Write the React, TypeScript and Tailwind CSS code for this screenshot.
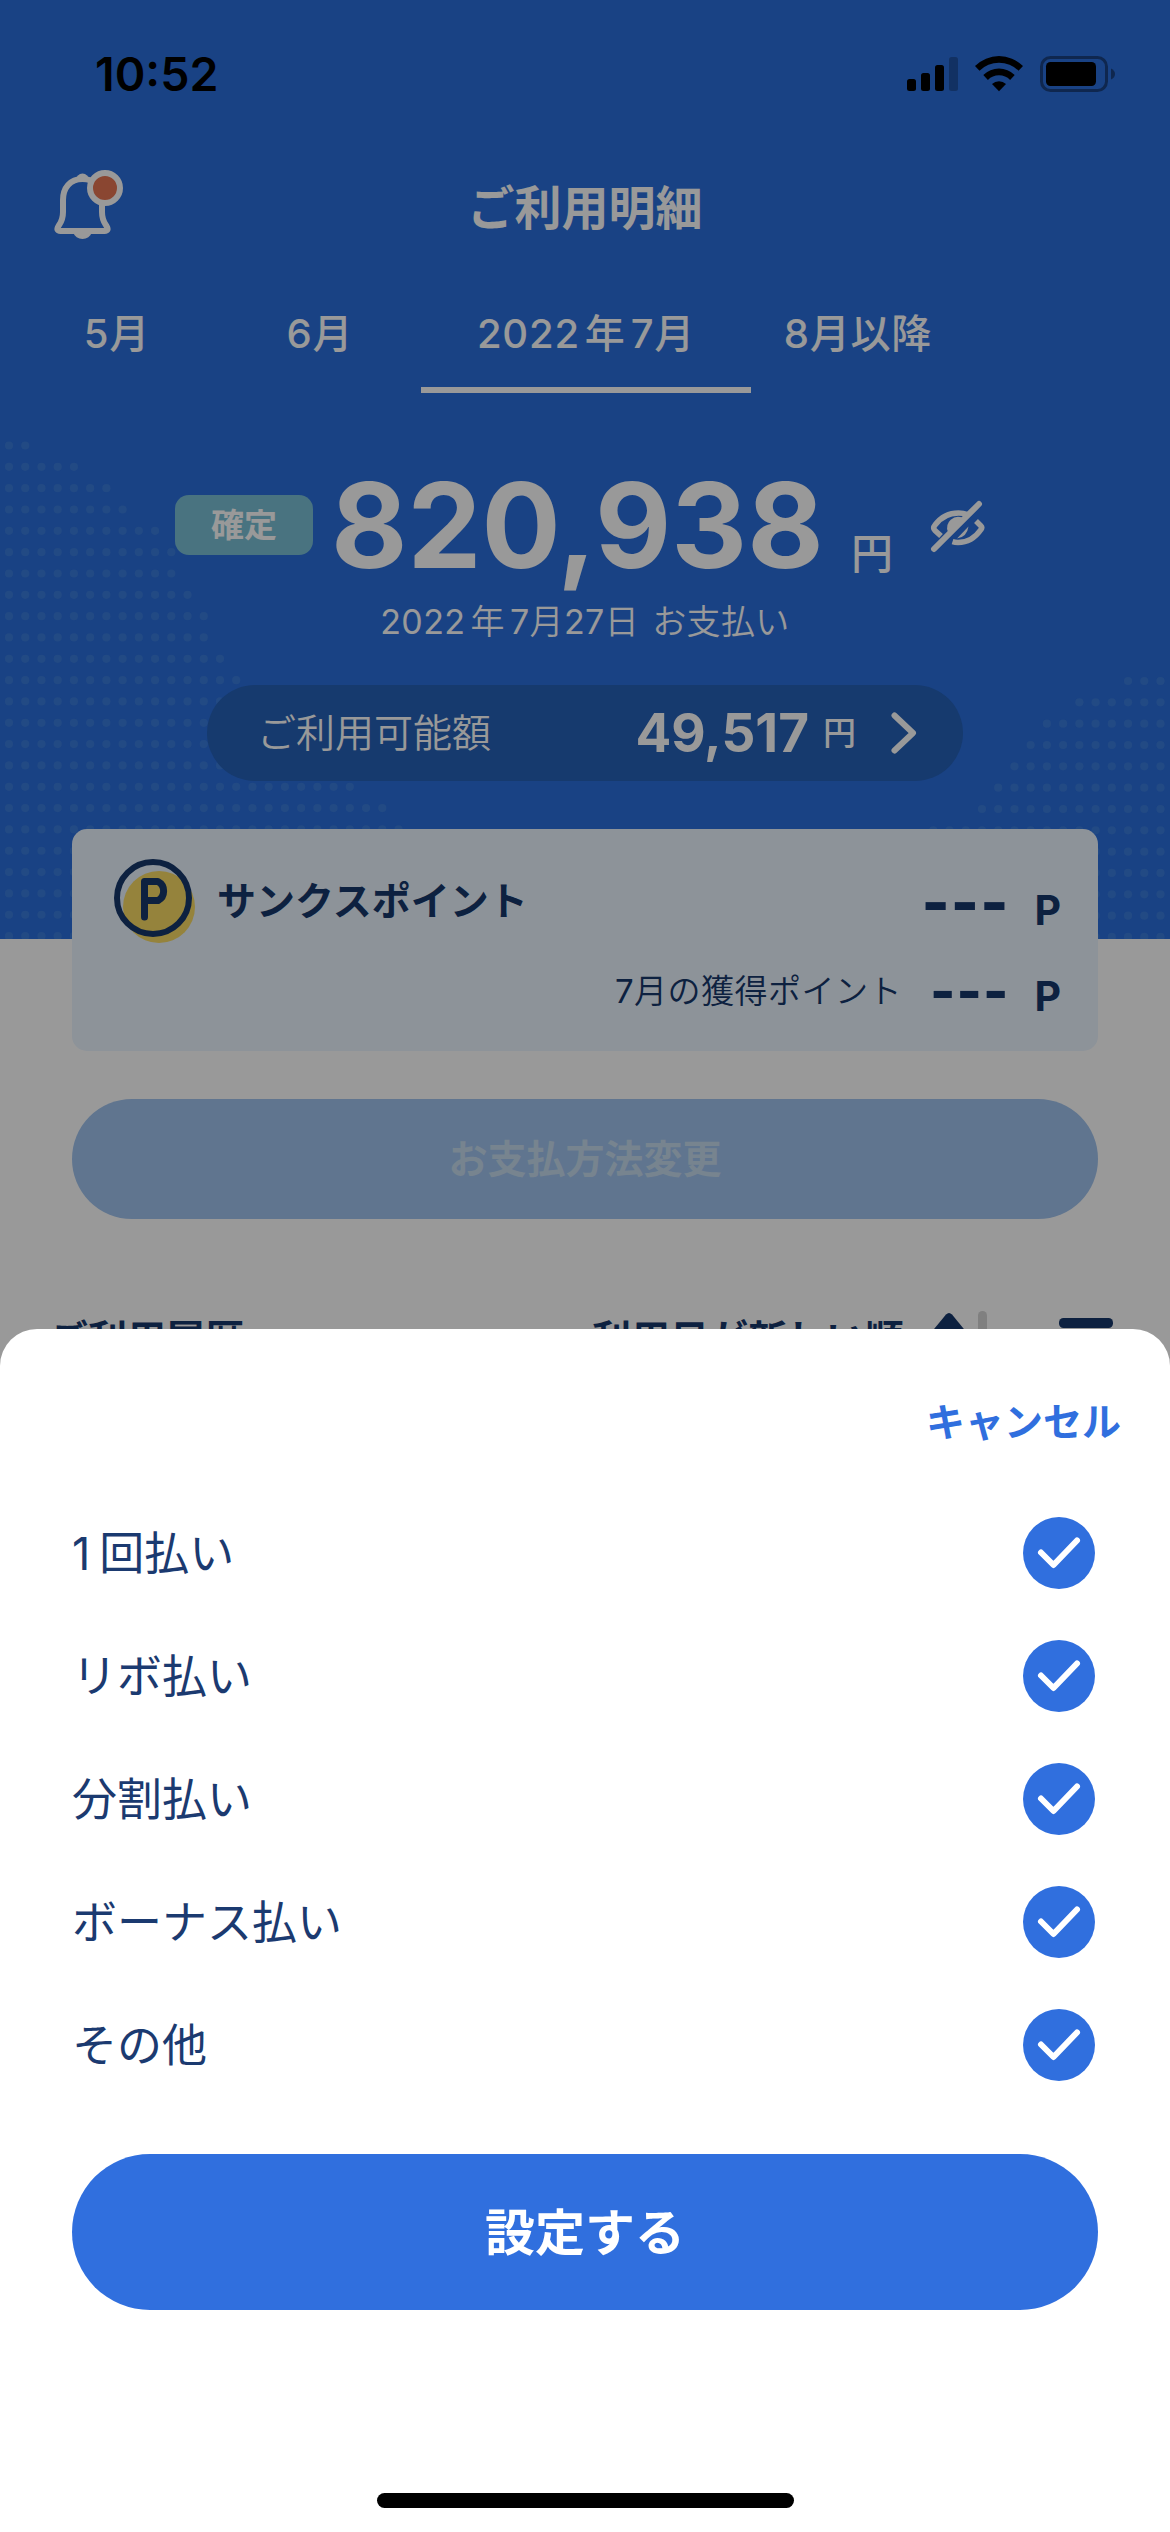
import { ReactNode, useState } from "react";

interface Tab {
  id: string;
  label: ReactNode;
  width: string;
}

const TABS: Tab[] = [
  { id: "may", label: "5月", width: "w-[204px]" },
  { id: "jun", label: "6月", width: "w-[202px]" },
  {
    id: "jul",
    label: (
      <>
        2022<span className="mx-[5px]">年</span>7月
      </>
    ),
    width: "w-[330px]",
  },
  { id: "aug", label: "8月以降", width: "w-[214px]" },
];

const OPTIONS = ["1回払い", "リボ払い", "分割払い", "ボーナス払い", "その他"];

// number of dots per row in the halftone corners
const LEFT_DOTS = [2, 5, 7, 8, 10, 11, 11, 12, 13, 13, 14, 15, 16, 17, 19, 20, 22, 24, 25, 27, 28, 29, 30, 31];
const RIGHT_DOTS = [3, 6, 8, 9, 10, 11, 12, 15, 16, 17, 18, 19, 20];

function HeroDots() {
  return (
    <svg className="absolute inset-0" width="1170" height="939" fill="#3a7cdc">
      {LEFT_DOTS.map((count, row) =>
        Array.from({ length: count }, (_, i) => (
          <circle key={`l${row}-${i}`} cx={9 + i * 16.23} cy={445.5 + row * 21.33} r="4.1" />
        )),
      )}
      {RIGHT_DOTS.map((count, row) =>
        Array.from({ length: count }, (_, i) => (
          <circle key={`r${row}-${i}`} cx={1160.5 - i * 16.23} cy={681 + row * 21.33} r="4.1" />
        )),
      )}
    </svg>
  );
}

function StatusBar() {
  return (
    <div className="absolute inset-x-0 top-0 z-20 flex h-[148px] items-center justify-between pl-[95px] pr-[54px] text-black">
      <span className="text-[46.5px] font-semibold leading-[48px]">10:52</span>
      <svg width="209" height="40" viewBox="907 54 209 40">
        <rect x="907" y="79" width="9" height="12" rx="2.5" />
        <rect x="921" y="73" width="9" height="18" rx="2.5" />
        <rect x="935" y="65" width="9" height="26" rx="2.5" />
        <rect x="949" y="57" width="9" height="34" rx="2.5" opacity="0.25" />
        <path d="M975 66a34 34 0 0 1 48 0l-4.500 4.800a27.600 27.600 0 0 0-39 0z" />
        <path d="M983.300 75a22.500 22.500 0 0 1 31.400 0l-4.600 4.900a15.800 15.800 0 0 0-22.200 0z" />
        <path d="M992 84a10.500 10.500 0 0 1 14 0l-7 7.300z" />
        <rect x="1041.500" y="57.500" width="65" height="33" rx="9" fill="none" stroke="#000" strokeWidth="3" opacity="0.4" />
        <rect x="1046" y="62" width="50" height="24" rx="4.500" />
        <path d="M1111 68.500q4 2 4 5.500t-4 5.500z" opacity="0.4" />
      </svg>
    </div>
  );
}

function BellIcon() {
  return (
    <svg width="72" height="72" viewBox="53 169 72 72">
      <path d="M76 180a6.500 6.500 0 0 1 13 0z" fill="#fff" />
      <path
        d="M82.500 179C70 179 63 188 63 200v12c0 8-2 10-4.500 14q-3 5 2 5h44q5 0 2-5c-2.500-4-4.500-6-4.500-14v-12c0-12-7-21-19.500-21z"
        fill="none"
        stroke="#fff"
        strokeWidth="6"
      />
      <path d="M73.500 233h18a9.200 7.500 0 0 1-18 0z" fill="#fff" />
      <circle cx="105" cy="188" r="15" fill="#e67553" stroke="#fff" strokeWidth="6" />
    </svg>
  );
}

function EyeOffIcon() {
  return (
    <svg width="56" height="54" viewBox="929 500 56 54" fill="none" stroke="#fff" strokeWidth="5.500">
      <path d="M940 536l-6-5.500q-2.500-2.500 0-5.500q9-12 23.500-12q5 0 9 1.500" />
      <path d="M975 521l5 5q1.500 1.500 0 3.500q-9 13-23 13q-3 0-5.500-.8" />
      <path d="M947 532a11 11 0 0 1 15-14z" fill="#fff" stroke="none" />
      <path d="M956 538.500q10-1.500 11.500-12z" fill="#fff" stroke="none" />
      <path d="M933 549L978 504" strokeWidth="6" strokeLinecap="round" />
    </svg>
  );
}

function PointIcon() {
  return (
    <svg width="84" height="86" viewBox="113 858 84 86" fill="none" stroke="#16376b">
      <circle cx="159" cy="907" r="36" fill="#f8da64" stroke="none" />
      <circle cx="153" cy="898" r="36" strokeWidth="6" />
      <path d="M144.500 917V881.500h13.500a9.800 10.500 0 0 1 0 19h-13" strokeWidth="7" strokeLinecap="round" strokeLinejoin="round" />
    </svg>
  );
}

function CheckMark({ checked }: { checked: boolean }) {
  return (
    <span
      className={`flex size-[72px] items-center justify-center rounded-full ${
        checked ? "bg-[#306fde]" : "bg-stone-200"
      }`}
    >
      <svg width="72" height="72" viewBox="0 0 72 72" fill="none" stroke="#fff" strokeWidth="6" strokeLinecap="round" strokeLinejoin="round">
        <path d="M18 35.500L30.500 48L54 23.500" />
      </svg>
    </span>
  );
}

function Header() {
  return (
    <div className="relative h-[939px] bg-[#2a6edc] text-white">
      <HeroDots />
      <div className="relative flex flex-col">
        <div className="mt-[147px] grid h-[120px] grid-cols-3 items-center px-[53px]">
          <div className="pb-[4px]">
            <BellIcon />
          </div>
          <h1 className="pt-[2px] text-center text-[47px] font-bold leading-[60px]">ご利用明細</h1>
        </div>

        <nav className="flex h-[126px] pl-[15px]">
          {TABS.map((tab) => (
            <div
              key={tab.id}
              className={`flex shrink-0 justify-center border-b-[6px] pt-[37px] text-[40px] font-medium leading-[60px] tracking-[0.8px] ${tab.width} ${
                tab.id === "jul" ? "border-white" : "border-transparent"
              }`}
            >
              {tab.label}
            </div>
          ))}
        </nav>

        <div className="flex h-[196px] pl-[175px]">
          <span className="mt-[102px] flex h-[60px] w-[138px] items-center justify-center rounded-[14px] bg-[#7bc0d5] pt-[1px] text-[33px] font-bold leading-none">
            確定
          </span>
          <span className="ml-[18px] mt-[72px] w-[504px] text-[117.5px] font-bold leading-[120px]">820,938</span>
          <span className="ml-[16px] mt-[131px] text-[42px] font-medium leading-[60px]">円</span>
          <span className="ml-[37px] mt-[107px]">
            <EyeOffIcon />
          </span>
        </div>
        <div className="mt-[13px] text-center text-[34px] font-[350] leading-[40px] tracking-[0.4px]">
          <span className="font-normal">2022</span>
          <span className="mx-[5px]">年</span>
          <span className="font-normal">7</span>月<span className="font-normal">27</span>日
          <span className="ml-[13px]">お支払い</span>
        </div>

        <div className="mx-[207px] mt-[43px] flex h-[96px] items-center rounded-full bg-[#2561b7] pl-[50px] pr-[45px]">
          <span className="text-[39px] font-[350] leading-[60px]">ご利用可能額</span>
          <span className="ml-auto text-[53px] font-bold leading-[60px]">49,517</span>
          <span className="ml-[14px] text-[33px] font-medium leading-[60px]">円</span>
          <svg className="ml-[34px]" width="28" height="42" viewBox="0 0 28 42" fill="none" stroke="#fff" strokeWidth="6" strokeLinecap="round" strokeLinejoin="round">
            <path d="M4.500 3.500L23 21L4.500 38.500" />
          </svg>
        </div>
      </div>
    </div>
  );
}

function PointCard() {
  return (
    <div className="relative mx-[72px] -mt-[110px] h-[222px] rounded-[15px] bg-[#ebf5ff] text-[#16376b]">
      <div className="flex h-[116px] items-start pl-[41px] pr-[37px] pt-[29px]">
        <PointIcon />
        <span className="ml-[20px] mt-[13px] text-[39px] font-bold leading-[60px]">サンクスポイント</span>
        <span className="ml-auto mt-[14px] text-[60px] font-extrabold leading-[60px] tracking-[1px]">---</span>
        <span className="ml-[25px] mt-[22px] text-[41px] font-bold leading-[60px]">P</span>
      </div>
      <div className="flex items-start justify-end pr-[37px]">
        <span className="mt-[16px] text-[33px] font-[350] leading-[60px] tracking-[0.5px]">
          <span className="font-normal">7</span>月の獲得ポイント
        </span>
        <span className="ml-[28px] mt-[16px] text-[54px] font-extrabold leading-[60px] tracking-[1px]">---</span>
        <span className="ml-[25px] mt-[21px] text-[41px] font-bold leading-[60px]">P</span>
      </div>
    </div>
  );
}

function HistoryHeader() {
  return (
    <div className="mt-[84px] flex h-[72px] items-center pl-[49px] pr-[57px] text-[39px] font-bold leading-[60px] text-[#16376b]">
      <span>ご利用履歴</span>
      <span className="ml-auto">利用日が新しい順</span>
      <svg className="ml-[28px]" width="58" height="60" viewBox="932 1310 58 60">
        <path d="M946 1315.500q3-3 6 0l16 19.500v25h-38v-25z" fill="#16376b" />
        <rect x="978" y="1312" width="9" height="58" rx="4.500" fill="#d5d5d5" />
      </svg>
      <svg className="ml-[69px]" width="54" height="60" viewBox="0 0 54 60">
        <rect y="9" width="54" height="10" rx="4.500" fill="#16376b" />
      </svg>
    </div>
  );
}

function OptionLabel({ text }: { text: string }) {
  const digits = text.match(/^\d+/)?.[0];
  return (
    <span className="pt-[2px]">
      {digits && <span className="mr-[9px]">{digits}</span>}
      {digits ? text.slice(digits.length) : text}
    </span>
  );
}

function PaymentSheet() {
  const [selected, setSelected] = useState<string[]>(OPTIONS);

  function toggle(option: string) {
    setSelected((prev) => (prev.includes(option) ? prev.filter((o) => o !== option) : [...prev, option]));
  }

  return (
    <div className="absolute inset-x-0 bottom-0 z-20 flex h-[1203px] flex-col rounded-t-[37px] bg-white">
      <div className="flex h-[162px] items-start justify-end pr-[49px] pt-[63px]">
        <button className="text-[39px] font-bold leading-[60px] text-[#306fde]">キャンセル</button>
      </div>
      <div className="flex flex-col px-[72px]">
        {OPTIONS.map((option) => (
          <button
            key={option}
            onClick={() => toggle(option)}
            className="flex h-[123px] items-center justify-between pr-[3px] text-[45px] font-normal leading-[60px] text-[#1b3a70]"
          >
            <OptionLabel text={option} />
            <CheckMark checked={selected.includes(option)} />
          </button>
        ))}
      </div>
      <button className="mx-[72px] mt-[48px] h-[156px] rounded-full bg-[#306fde] pt-[2px] text-[50px] font-bold leading-[60px] text-white">
        設定する
      </button>
      <div className="mx-auto mt-[183px] h-[15px] w-[417px] rounded-full bg-black" />
    </div>
  );
}

export default function App() {
  return (
    <div className="relative h-[2532px] w-[1170px] overflow-hidden bg-white font-['Inter','Noto_Sans_CJK_JP',sans-serif]">
      <Header />
      <PointCard />
      <button className="mx-[72px] mt-[48px] flex h-[120px] w-[1026px] items-center justify-center rounded-full bg-[#a0c3ee] text-[39px] font-bold leading-[60px] text-[#c6dcee]">
        お支払方法変更
      </button>
      <HistoryHeader />
      <div className="absolute inset-0 z-10 bg-black/40" />
      <StatusBar />
      <PaymentSheet />
    </div>
  );
}
